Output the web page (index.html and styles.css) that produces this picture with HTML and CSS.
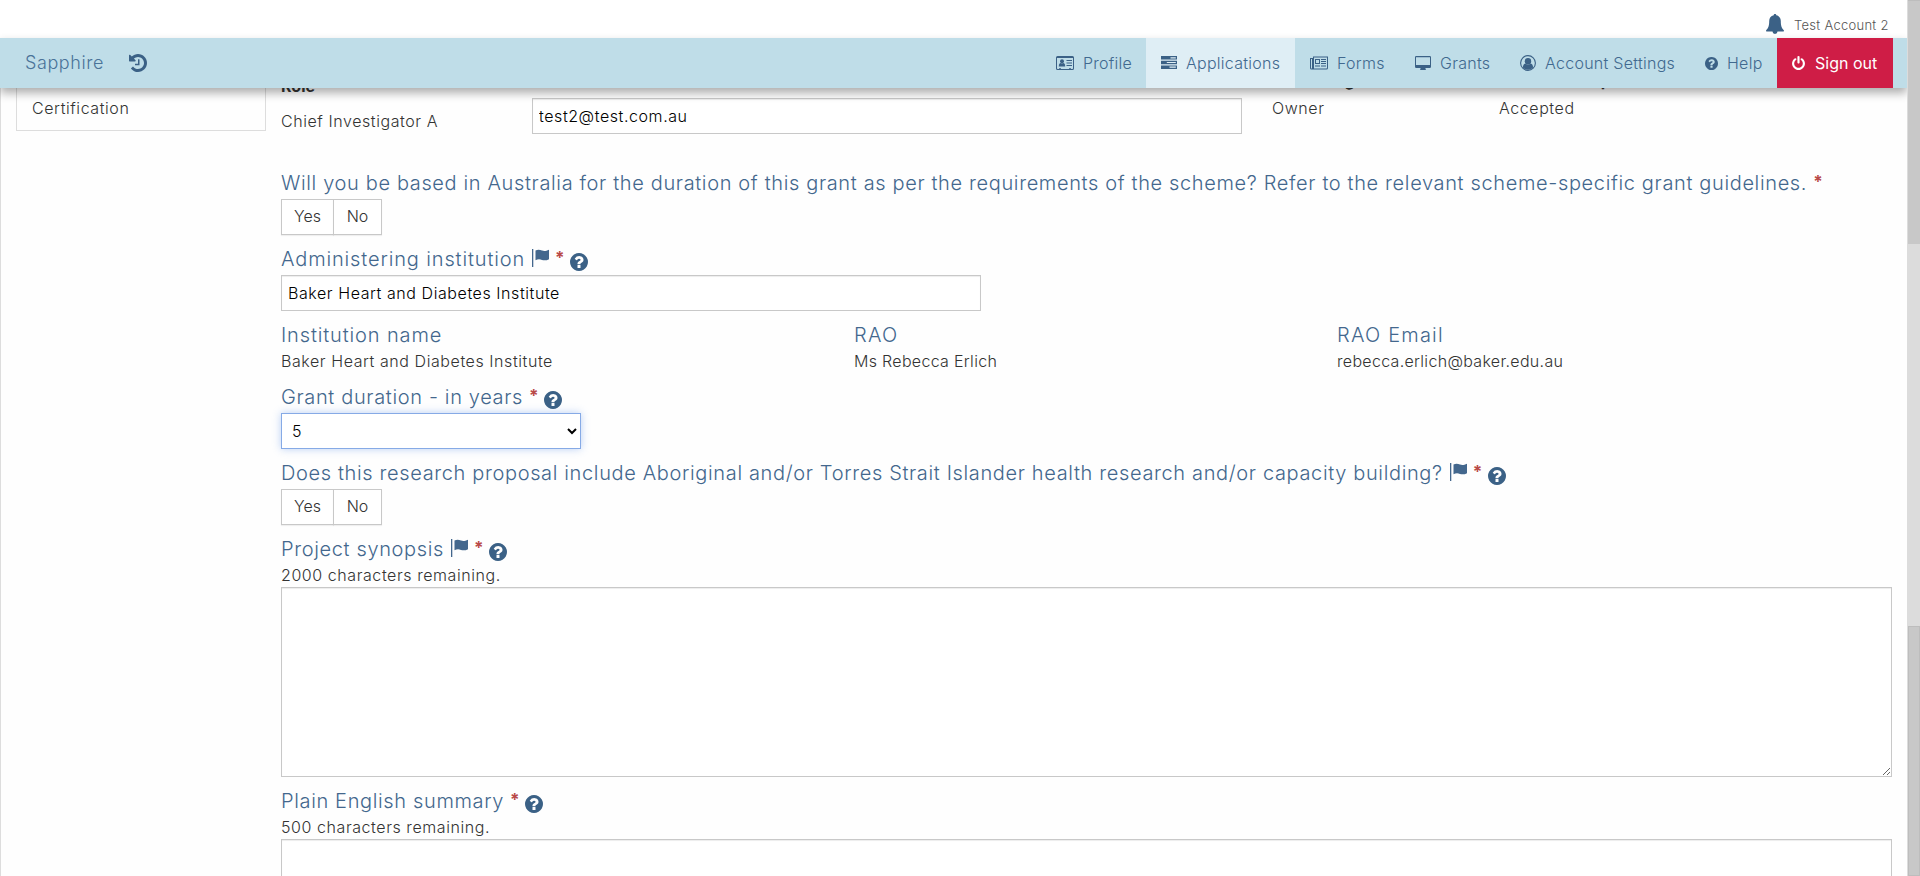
FILE: index.html
```html
<!DOCTYPE html>
<html lang="en">
<head>
<meta charset="utf-8">
<title>Sapphire</title>
<link rel="stylesheet" href="styles.css">
</head>
<body>
<svg class="sprite" aria-hidden="true">
  <symbol id="help" viewBox="128 128 1536 1536"><path d="M1024 1376v-192q0-14-9-23t-23-9h-192q-14 0-23 9t-9 23v192q0 14 9 23t23 9h192q14 0 23-9t9-23zm256-672q0-88-55.500-163t-138.500-116-170-41q-243 0-371 213-15 24 8 42l132 100q7 6 19 6 16 0 25-12 53-68 86-92 34-24 86-24 48 0 85.500 26t37.500 59q0 38-20 61t-68 45q-63 28-115.500 86.500t-52.500 125.500v36q0 14 9 23t23 9h192q14 0 23-9t9-23q0-19 21.500-49.500t54.500-49.500q32-18 49-28.500t46-35 44.500-48 28-60.500 12.500-81zm384 192q0 209-103 385.500t-279.500 279.500-385.500 103-385.500-103-279.500-279.500-103-385.500 103-385.500 279.500-279.500 385.500-103 385.500 103 279.500 279.500 103 385.500z"/></symbol>
  <symbol id="flag" viewBox="0 0 17 18"><path d="M0 0h1.300v18H0zM3.500 1.500C6 .3 8 .8 10 1.600c2 .8 4 .6 7-.8v9.400c-2.500 1.300-4.700 1.500-7 .7-2.200-.8-4-.9-6.500.3z"/></symbol>
</svg>
<div class="window">
  <div class="page">
    <header class="header">
      <div class="account">
        <svg class="bell" viewBox="0 0 18 20"><path d="M9 0c.8 0 1.300.5 1.300 1.300 3 .6 4.500 2.900 4.500 5.700 0 5 .9 7.200 3.200 9.400 0 .8-.6 1.200-1.200 1.200H1.200C.6 17.600 0 17.200 0 16.400 2.300 14.200 3.200 12 3.200 7c0-2.800 1.500-5.100 4.500-5.700C7.700.5 8.200 0 9 0zM6.500 17.600h5A2.500 2.400 0 0 1 6.500 17.600z"/></svg>
        <span class="account-name">Test Account 2</span>
      </div>
      <nav class="nav">
        <a class="brand">Sapphire</a>
        <svg class="history" viewBox="128 128 1536 1536"><path d="M1664 896q0 156-61 298t-164 245-245 164-298 61q-172 0-327-72.500t-264-204.500q-7-10-6.500-22.500t8.500-20.500l137-138q10-9 25-9 16 2 23 12 73 95 179 147t225 52q104 0 198.500-40.500t163.500-109.500 109.500-163.500 40.500-198.500-40.500-198.500-109.500-163.500-163.500-109.500-198.500-40.500q-98 0-188 35.500t-160 101.500l137 138q31 30 14 69-17 40-59 40h-448q-26 0-45-19t-19-45v-448q0-42 40-59 39-17 69 14l130 129q107-101 244.500-156.500t284.500-55.500q156 0 298 61t245 164 164 245 61 298zm-640-288v448q0 14-9 23t-23 9h-320q-14 0-23-9t-9-23v-64q0-14 9-23t23-9h224v-352q0-14 9-23t23-9h64q14 0 23 9t9 23z"/></svg>
        <div class="menu">
          <a class="item profile"><svg class="i18" viewBox="0 0 18 14"><path fill-rule="evenodd" d="M1.500 0h15A1.500 1.500 0 0 1 18 1.500v11a1.500 1.500 0 0 1-1.500 1.500h-15A1.500 1.500 0 0 1 0 12.500v-11A1.500 1.500 0 0 1 1.500 0zM1 2v10.500l.5.500H3v-.8h2V13h8v-.8h2V13h1.500l.5-.5V2z"/><circle cx="6" cy="5.200" r="2"/><path d="M2.800 10.500c0-2.400 1-3.400 1.900-3.400.8.600 1.800.6 2.600 0 .9 0 1.900 1 1.900 3.400zM10.500 4H16v1h-5.500zM10.500 6.500H16v1h-5.500zM10.500 9H16v1h-5.500z"/></svg><span>Profile</span></a>
          <a class="item applications"><svg class="i16 tasks" viewBox="0 0 16 13"><path fill-rule="evenodd" d="M0 0h16v3.600H0zM9.500 1.200v1.200h5.300V1.200zM0 4.700h16v3.600H0zM5.800 5.900v1.200h9V5.900zM0 9.400h16V13H0zM8.500 10.600v1.200h6.300v-1.200z"/></svg><span>Applications</span></a>
          <a class="item forms"><svg class="i18" viewBox="0 0 18 13"><path fill-rule="evenodd" d="M3 0h15v11.500a1.500 1.500 0 0 1-1.500 1.500h-15A1.500 1.500 0 0 1 0 11.500V1.500h3zM1 2.500v9a.5.500 0 0 0 1 0v-9zM4 1v11h12.500l.5-.5V1zM5 2.500h5v5H5zM6 3.500v3h3v-3zM11 2.500h5v1h-5zM11 4.500h5v1h-5zM11 6.500h5v1h-5zM5 9h5v1H5zM11 9h5v1h-5z"/></svg><span>Forms</span></a>
          <a class="item grants"><svg class="i16" viewBox="0 0 16 14"><path fill-rule="evenodd" d="M1.200 0h13.600A1.200 1.200 0 0 1 16 1.200v9.600a1.200 1.200 0 0 1-1.200 1.200H10.300l.5 1.300v.7H5.200v-.7L5.700 12H1.200A1.200 1.200 0 0 1 0 10.800V1.200A1.200 1.200 0 0 1 1.200 0zM1 1.200V9h14V1.200z"/></svg><span>Grants</span></a>
          <a class="item settings"><svg class="i16" viewBox="0 0 16 16"><circle cx="8" cy="8" r="7.400" fill="none" stroke="currentColor" stroke-width="1.100"/><circle cx="8" cy="6.200" r="3.200"/><path d="M2.900 12.400c.1-2 .9-3.500 2.300-3.800 1.600 1.300 4 1.300 5.600 0 1.400.3 2.200 1.800 2.300 3.800A6.500 6.500 0 0 1 2.900 12.400z"/></svg><span>Account Settings</span></a>
          <a class="item support"><svg class="i13"><use href="#help"/></svg><span>Help</span></a>
          <a class="item signout"><svg class="i13 power" viewBox="128 0 1536 1664"><path d="M1664 896q0 156-61 298t-164 245-245 164-298 61-298-61-245-164-164-245-61-298q0-182 80.500-343t226.500-270q43-32 95.500-25t83.500 50q32 42 24.500 94.500t-49.500 84.500q-98 74-151.500 181t-53.500 228q0 104 40.500 198.500t109.500 163.500 163.500 109.500 198.500 40.500 198.500-40.500 163.500-109.500 109.500-163.500 40.500-198.500q0-121-53.500-228t-151.500-181q-42-32-49.500-84.500t24.500-94.500q31-43 84-50t95 25q146 109 226.500 270t80.500 343zm-640-768v640q0 52-38 90t-90 38-90-38-38-90v-640q0-52 38-90t90-38 90 38 38 90z"/></svg><span>Sign out</span></a>
        </div>
      </nav>
    </header>
    <div class="body">
      <aside class="sidebar"><div class="side-item"><span>Certification</span></div></aside>
      <main class="main">
        <div class="roles">
          <div class="role-name"><b>Role</b><span>Chief Investigator A</span></div>
          <input class="control role-email" value="test2@test.com.au">
          <div class="role-cell access"><b>Access right</b><span>Owner</span></div>
          <div class="role-cell"><b>Invitation response</b><span>Accepted</span></div>
        </div>

        <div class="field">
          <div class="label"><span>Will you be based in Australia for the duration of this grant as per the requirements of the scheme? Refer to the relevant scheme-specific grant guidelines.</span><span class="star">*</span></div>
          <div class="toggle"><button>Yes</button><button>No</button></div>
        </div>
        <div class="field">
          <div class="label"><span class="wide">Administering institution</span><svg class="flag"><use href="#flag"/></svg><span class="star">*</span><svg class="q"><use href="#help"/></svg></div>
          <input class="control institution" value="Baker Heart and Diabetes Institute">
        </div>
        <div class="field facts">
          <div><div class="label"><span class="wide">Institution name</span></div><div class="value">Baker Heart and Diabetes Institute</div></div>
          <div><div class="label"><span class="wider">RAO</span></div><div class="value snug">Ms Rebecca Erlich</div></div>
          <div><div class="label"><span class="wider">RAO Email</span></div><div class="value snug">rebecca.erlich@baker.edu.au</div></div>
        </div>
        <div class="field">
          <div class="label"><span>Grant duration - in years</span><span class="star">*</span><svg class="q"><use href="#help"/></svg></div>
          <select class="control duration"><option>5</option></select>
        </div>
        <div class="field">
          <div class="label"><span>Does this research proposal include Aboriginal and/or Torres Strait Islander health research and/or capacity building?</span><svg class="flag"><use href="#flag"/></svg><span class="star">*</span><svg class="q"><use href="#help"/></svg></div>
          <div class="toggle"><button>Yes</button><button>No</button></div>
        </div>
        <div class="field">
          <div class="label"><span>Project synopsis</span><svg class="flag"><use href="#flag"/></svg><span class="star">*</span><svg class="q"><use href="#help"/></svg></div>
          <div class="value">2000 characters remaining.</div>
          <textarea class="control area"></textarea>
        </div>
        <div class="field">
          <div class="label"><span>Plain English summary</span><span class="star">*</span><svg class="q"><use href="#help"/></svg></div>
          <div class="value">500 characters remaining.</div>
          <textarea class="control area"></textarea>
        </div>
      </main>
    </div>
  </div>
  <div class="scrollbar"><div class="thumb thumb-top"></div><div class="thumb thumb-bottom"></div></div>
</div>
</body>
</html>
```
FILE: styles.css
```css
* { box-sizing: border-box; }
body {
  margin: 0;
  font: 300 16px/20px Inter, "Open Sans", sans-serif;
  letter-spacing: .57px;
  color: #333;
  background: #fefefe;
  overflow: hidden;
}
svg { fill: currentColor; flex: none; display: block; }
.sprite { width: 0; height: 0; position: absolute; }
.window { display: flex; height: 876px; }
.page { flex: 1; min-width: 0; overflow: hidden; }

.header { position: relative; z-index: 2; background: #fff; color: #3b6186; }
.account { height: 38px; display: flex; justify-content: flex-end; padding: 14px 19px 0 0; }
.bell { width: 18px; height: 20px; margin-right: 10px; }
.account-name { font-size: 13px; line-height: 22px; width: 94px; color: #555; white-space: nowrap; letter-spacing: .28px; }
.nav {
  height: 50px;
  display: flex;
  align-items: center;
  background: #bfdde8;
  padding: 0 14px 0 25px;
  box-shadow: 0 5px 9px rgba(0, 0, 0, .32);
}
.brand { font-size: 18px; width: 104px; color: #4a7399; }
.history { width: 18px; height: 18px; }
.menu { display: flex; margin-left: auto; height: 50px; letter-spacing: .27px; }
.item { display: flex; align-items: center; gap: 9px; padding-left: 15px; white-space: nowrap; color: #41698f; }
.item span { padding-bottom: 1px; }
.item svg { color: #3b6186; }
.i18 { width: 18px; height: 14px; }
.i16 { width: 16px; height: 14px; }
.i13 { width: 13px; height: 13px; }
.tasks { height: 13px; margin-bottom: 1px; }
.profile { width: 105px; }
.applications { width: 149px; background: #dfeef5; }
.forms { width: 105px; }
.grants { width: 105px; }
.settings { width: 185px; }
.settings svg { height: 16px; }
.support { width: 87px; }
.signout { width: 116px; background: #cf1d46; color: #fff; font-weight: 400; letter-spacing: 0; }
.signout svg { color: #fff; height: 14px; margin-right: 1px; }

.body { display: flex; margin-top: -12px; border-left: 1px solid #ddd; }
.sidebar { width: 280px; padding-left: 15px; }
.side-item { width: 250px; height: 55px; border: 1px solid #ddd; padding: 21px 0 0 15px; }
.main { flex: 1; padding-right: 15px; }
.roles { display: flex; height: 97px; color: #333; }
.roles b { font-weight: 700; display: block; letter-spacing: 0; }
.role-name { width: 251px; }
.role-name span { display: block; padding-top: 15px; }
.role-email { width: 710px; margin-top: 22px; }
.role-cell { width: 227px; margin-top: -6px; }
.role-cell span { display: block; padding-top: 8px; }
.access { margin-left: 30px; }

.control {
  display: block;
  height: 36px;
  border: 1px solid #c8c8c8;
  border-radius: 0;
  background: #fff;
  color: #000;
  padding: 0 6px;
  font: inherit;
  letter-spacing: inherit;
  box-shadow: inset 0 1px 1px rgba(0, 0, 0, .075);
  outline: none;
}
.field { margin-bottom: 14px; }
.label { display: flex; height: 26px; font-size: 20px; line-height: 20px; letter-spacing: .64px; color: #43678d; white-space: nowrap; }
.wide { letter-spacing: .86px; }
.wider { letter-spacing: 1.2px; }
.flag { width: 17px; height: 18px; margin-left: 7px; }
.star { color: #b94a48; margin-left: 6px; width: 8px; font-weight: 700; font-size: 17px; line-height: 18px; letter-spacing: 0; }
.q { width: 18px; height: 18px; margin: 4px 0 0 7px; color: #3b6186; }
.value { height: 22px; }
.snug { letter-spacing: .31px; }
.institution { width: 700px; }
.facts { display: grid; grid-template-columns: 573px 483px 1fr; }
.duration {
  width: 300px;
  border-color: #86aae6;
  box-shadow: 0 0 8px rgba(102, 150, 233, .45);
}
.toggle { display: flex; }
.toggle button {
  height: 36px;
  width: 53px;
  padding: 0 0 2px;
  border: 1px solid #c8c8c8;
  background: #fff;
  color: #333;
  font: inherit;
  box-shadow: 0 1px 1px rgba(0, 0, 0, .06);
}
.toggle button + button { width: 49px; margin-left: -1px; }
.area { width: 100%; height: 190px; }

.scrollbar { width: 13px; background: #dcdcdc; padding-left: 1px; display: flex; flex-direction: column; justify-content: space-between; }
.thumb { background: #c8c8c8; border: 1px solid #bdbdbd; }
.thumb-top { height: 244px; border-width: 1px 0 0; }
.thumb-bottom { height: 250px; }
```
